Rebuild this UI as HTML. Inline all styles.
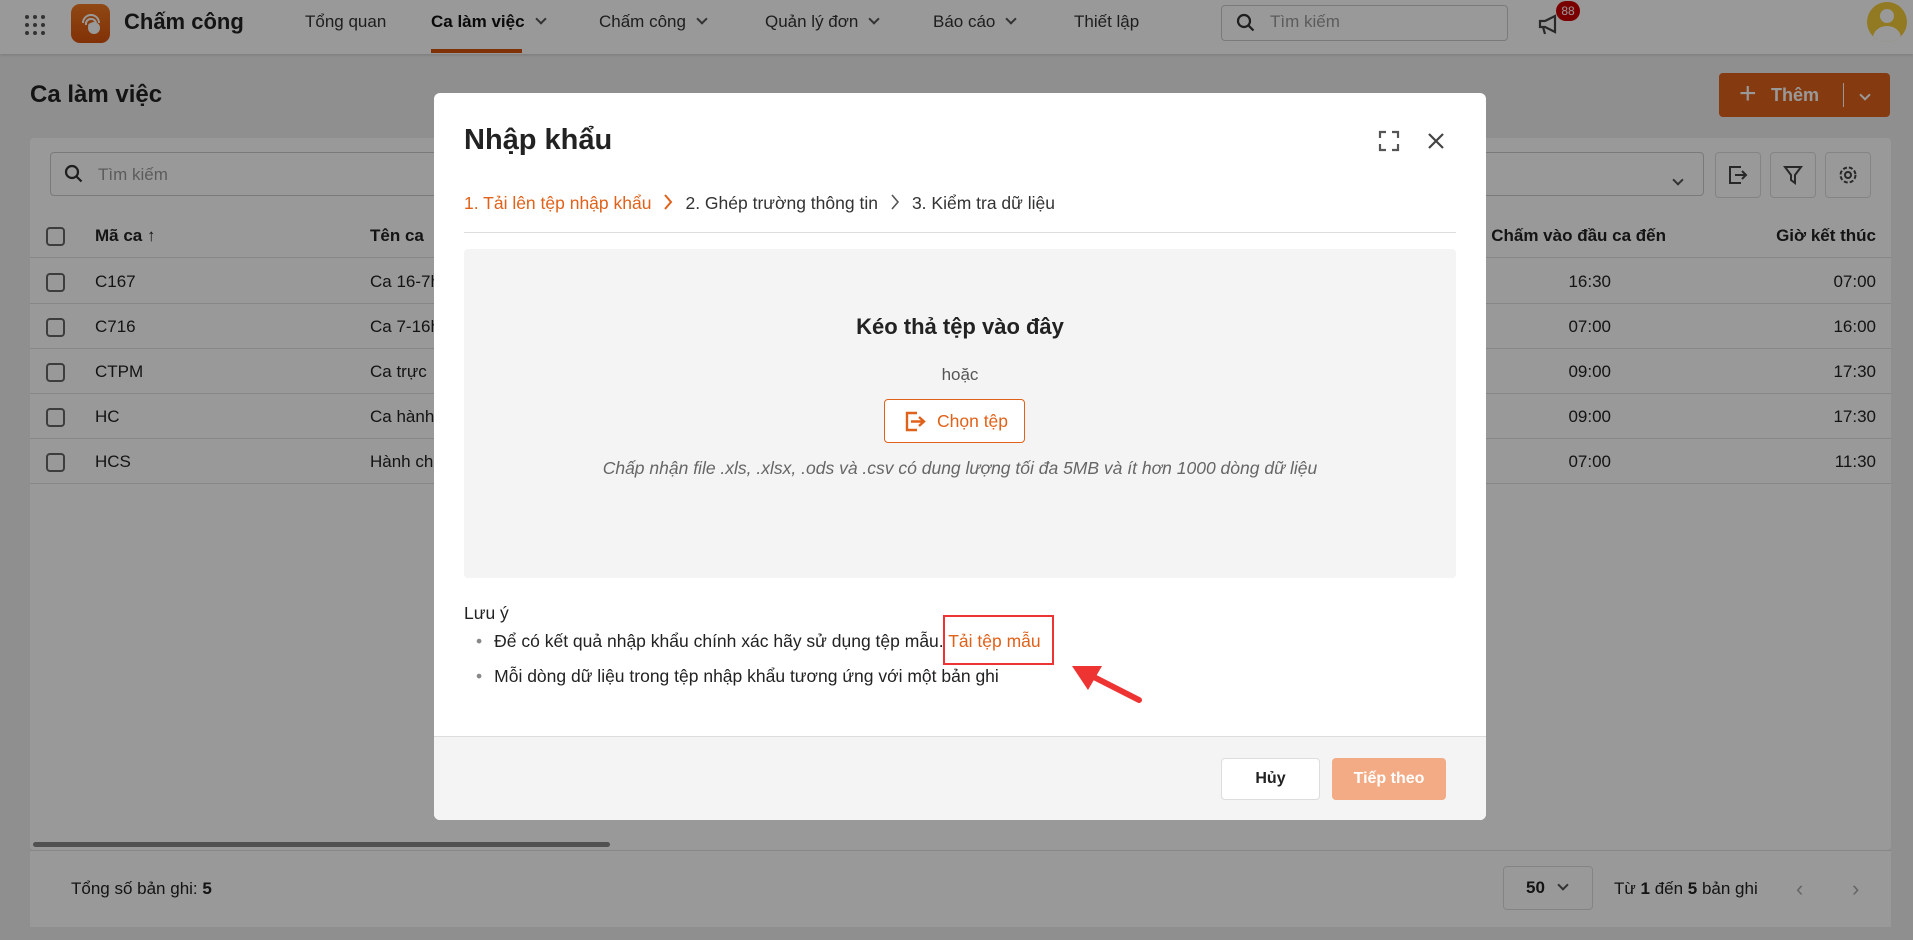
<!DOCTYPE html>
<html><head><meta charset="utf-8">
<style>
*{box-sizing:border-box;margin:0;padding:0}
body{width:1913px;height:940px;overflow:hidden;position:relative;background:#eeeeee;font-family:"Liberation Sans",sans-serif;color:#222}
.a{position:absolute}
.hdr{left:0;top:0;width:1913px;height:54px;background:#fff;box-shadow:0 1px 3px rgba(0,0,0,.15)}
.nav{top:0;height:54px;line-height:44px;font-size:17px;color:#333}
.chev{display:inline-block;width:8px;height:8px;border-right:2px solid #555;border-bottom:2px solid #555;transform:rotate(45deg);margin-left:12px;position:relative;top:-4px}
.panel{left:30px;top:138px;width:1861px;height:712px;background:#fff;border-radius:4px}
.row{left:30px;width:1861px;height:45px;border-bottom:1px solid #e2e2e2;font-size:17px;line-height:45px}
.cb{position:absolute;left:16px;top:14px;width:19px;height:19px;border:2px solid #666;border-radius:4px}
.ov{left:0;top:0;width:1913px;height:940px;background:rgba(0,0,0,.4)}
.modal{left:434px;top:93px;width:1052px;height:727px;background:#fff;border-radius:6px;overflow:hidden}
.ib{width:46px;height:46px;border:1px solid #ddd;border-radius:4px;background:#fff;top:152px}
.sc{display:inline-block;vertical-align:middle;margin:0 12px;position:relative;top:-2px}
</style></head><body>
<div class="a hdr"></div>
<svg class="a" style="left:24px;top:14px" width="22" height="22" viewBox="0 0 22 22" fill="#555"><circle cx="3" cy="3" r="2"/><circle cx="11" cy="3" r="2"/><circle cx="19" cy="3" r="2"/><circle cx="3" cy="11" r="2"/><circle cx="11" cy="11" r="2"/><circle cx="19" cy="11" r="2"/><circle cx="3" cy="19" r="2"/><circle cx="11" cy="19" r="2"/><circle cx="19" cy="19" r="2"/></svg>
<div class="a" style="left:71px;top:4px;width:39px;height:39px;border-radius:9px;background:linear-gradient(#f07a22,#d8520c)"></div>
<svg class="a" style="left:77px;top:9px" width="28" height="28" viewBox="0 0 28 28" fill="none" stroke="#fff" stroke-width="2"><path d="M6 14a8 8 0 0 1 16 0M9 16a5 5 0 0 1 10-2M12 17a2 2 0 0 1 4 0"/><circle cx="17" cy="19" r="5" fill="#fff"/></svg>
<div class="a" style="left:124px;top:9px;font-size:22px;font-weight:bold;color:#222">Chấm công</div>
<div class="a nav" style="left:305px">Tổng quan</div>
<div class="a nav" style="left:431px;font-weight:bold;color:#111">Ca làm việc<span class="chev"></span></div>
<div class="a" style="left:431px;top:49px;width:91px;height:4px;background:#d8520c"></div>
<div class="a nav" style="left:599px">Chấm công<span class="chev"></span></div>
<div class="a nav" style="left:765px">Quản lý đơn<span class="chev"></span></div>
<div class="a nav" style="left:933px">Báo cáo<span class="chev"></span></div>
<div class="a nav" style="left:1074px">Thiết lập</div>
<div class="a" style="left:1221px;top:5px;width:287px;height:36px;border:1px solid #ccc;border-radius:4px;background:#fff"></div>
<svg class="a" style="left:1236px;top:13px" width="20" height="20" viewBox="0 0 20 20" fill="none" stroke="#333" stroke-width="2.2"><circle cx="8" cy="8" r="6"/><path d="M12.5 12.5l5 5"/></svg>
<div class="a" style="left:1270px;top:12px;font-size:17px;color:#999">Tìm kiếm</div>
<svg class="a" style="left:1537px;top:12px" width="26" height="26" viewBox="0 0 26 26" fill="none" stroke="#444" stroke-width="2.2"><path d="M3 9h5l10-5v16l-10-5H3zM6 15l2 7"/></svg>
<div class="a" style="left:1556px;top:1px;width:24px;height:20px;border-radius:10px;background:#c00;color:#fff;font-size:12px;line-height:20px;text-align:center">88</div>
<div class="a" style="left:1867px;top:2px;width:40px;height:40px;border-radius:50%;background:#f2cc3a;overflow:hidden"><div class="a" style="left:13px;top:7px;width:14px;height:14px;border-radius:50%;background:#fff"></div><div class="a" style="left:6px;top:24px;width:28px;height:24px;border-radius:50%;background:#fff"></div></div>

<div class="a" style="left:30px;top:81px;font-size:24px;font-weight:bold;color:#222">Ca làm việc</div>
<div class="a" style="left:1719px;top:73px;width:171px;height:44px;background:#e0621a;border-radius:4px;color:#fff;font-size:18px;font-weight:bold;line-height:44px"><span style="position:absolute;left:20px;font-size:30px;font-weight:normal;top:-1px">+</span><span style="position:absolute;left:52px">Thêm</span><span style="position:absolute;left:124px;top:10px;width:1px;height:24px;background:#fff"></span><span class="chev" style="position:absolute;left:130px;top:18px;border-color:#fff"></span></div>
<div class="a panel"></div>
<div class="a" style="left:50px;top:152px;width:1654px;height:44px;border:1px solid #ccc;border-radius:4px"></div>
<svg class="a" style="left:64px;top:164px" width="20" height="20" viewBox="0 0 20 20" fill="none" stroke="#333" stroke-width="2.2"><circle cx="8" cy="8" r="6"/><path d="M12.5 12.5l5 5"/></svg>
<div class="a" style="left:98px;top:165px;font-size:17px;color:#999">Tìm kiếm</div>
<span class="a chev" style="left:1674px;top:171px;margin:0"></span>
<div class="a ib" style="left:1715px"></div><div class="a ib" style="left:1770px"></div><div class="a ib" style="left:1825px"></div>
<svg class="a" style="left:1727px;top:164px" width="22" height="22" viewBox="0 0 22 22" fill="none" stroke="#444" stroke-width="2"><path d="M14 3H3v16h11M8 11h11M15 7l4 4-4 4"/></svg>
<svg class="a" style="left:1782px;top:164px" width="22" height="22" viewBox="0 0 22 22" fill="none" stroke="#444" stroke-width="2"><path d="M3 3h16l-6 8v8l-4-3v-5z"/></svg>
<svg class="a" style="left:1837px;top:164px" width="22" height="22" viewBox="0 0 22 22" fill="none" stroke="#444" stroke-width="2"><circle cx="11" cy="11" r="3"/><circle cx="11" cy="11" r="7.5" stroke-dasharray="4 2"/></svg>
<div class="a row" style="top:213px;font-weight:bold;background:#fff"><div class="cb"></div><span class="a" style="left:65px">Mã ca ↑</span><span class="a" style="left:340px">Tên ca</span><span class="a" style="right:225px">Chấm vào đầu ca đến</span><span class="a" style="right:15px">Giờ kết thúc</span></div>
<div class="a row" style="top:259px"><div class="cb"></div><span class="a" style="left:65px">C167</span><span class="a" style="left:340px">Ca 16-7h</span><span class="a" style="right:280px">16:30</span><span class="a" style="right:15px">07:00</span></div>
<div class="a row" style="top:304px"><div class="cb"></div><span class="a" style="left:65px">C716</span><span class="a" style="left:340px">Ca 7-16h</span><span class="a" style="right:280px">07:00</span><span class="a" style="right:15px">16:00</span></div>
<div class="a row" style="top:349px"><div class="cb"></div><span class="a" style="left:65px">CTPM</span><span class="a" style="left:340px">Ca trực</span><span class="a" style="right:280px">09:00</span><span class="a" style="right:15px">17:30</span></div>
<div class="a row" style="top:394px"><div class="cb"></div><span class="a" style="left:65px">HC</span><span class="a" style="left:340px">Ca hành</span><span class="a" style="right:280px">09:00</span><span class="a" style="right:15px">17:30</span></div>
<div class="a row" style="top:439px"><div class="cb"></div><span class="a" style="left:65px">HCS</span><span class="a" style="left:340px">Hành ch</span><span class="a" style="right:280px">07:00</span><span class="a" style="right:15px">11:30</span></div>
<div class="a" style="left:33px;top:842px;width:577px;height:5px;border-radius:3px;background:#888"></div>
<div class="a" style="left:30px;top:850px;width:1861px;height:77px;background:#fff;border-top:1px solid #e2e2e2"></div>
<div class="a" style="left:71px;top:879px;font-size:17px">Tổng số bản ghi: <b>5</b></div>
<div class="a" style="left:1503px;top:866px;width:90px;height:44px;border:1px solid #ddd;border-radius:4px;background:#fff;font-size:17px;font-weight:bold;line-height:42px;padding-left:22px">50<span class="chev" style="margin-left:14px"></span></div>
<div class="a" style="left:1614px;top:879px;font-size:17px">Từ <b>1</b> đến <b>5</b> bản ghi</div>
<div class="a" style="left:1796px;top:876px;font-size:22px;color:#aaa">&#x2039;</div>
<div class="a" style="left:1852px;top:876px;font-size:22px;color:#aaa">&#x203A;</div>

<div class="a ov"></div>

<div class="a modal">
 <div class="a" style="left:30px;top:31px;font-size:29px;font-weight:bold;color:#222">Nhập khẩu</div>
 <svg class="a" style="left:944px;top:37px" width="22" height="22" viewBox="0 0 22 22" fill="none" stroke="#555" stroke-width="2.2"><path d="M2 8V2h6M14 2h6v6M20 14v6h-6M8 20H2v-6"/></svg>
 <svg class="a" style="left:992px;top:38px" width="20" height="20" viewBox="0 0 20 20" fill="none" stroke="#444" stroke-width="2.2"><path d="M3 3l14 14M17 3L3 17"/></svg>
 <div class="a" style="left:30px;top:100px;font-size:17.5px;color:#333;white-space:nowrap"><span style="color:#e0621a">1. Tải lên tệp nhập khẩu</span><svg class="sc" width="10" height="16" viewBox="0 0 10 16" fill="none" stroke="#e0621a" stroke-width="2"><path d="M2 1l6 7-6 7"/></svg>2. Ghép trường thông tin<svg class="sc" width="10" height="16" viewBox="0 0 10 16" fill="none" stroke="#555" stroke-width="1.6"><path d="M2 1l6 7-6 7"/></svg>3. Kiểm tra dữ liệu</div>
 <div class="a" style="left:30px;top:139px;width:992px;height:1px;background:#ddd"></div>
 <div class="a" style="left:30px;top:156px;width:992px;height:329px;background:#f4f4f4;border-radius:4px;text-align:center">
  <div class="a" style="left:0;width:992px;top:65px;font-size:22px;font-weight:bold;color:#222">Kéo thả tệp vào đây</div>
  <div class="a" style="left:0;width:992px;top:116px;font-size:17px;color:#555">hoặc</div>
  <div class="a" style="left:420px;top:150px;width:141px;height:44px;border:1px solid #e0621a;border-radius:4px;background:#fff;color:#e0621a;font-size:17.5px;line-height:42px;padding-left:52px;text-align:left">Chọn tệp
   <svg class="a" style="left:20px;top:11px" width="22" height="21" viewBox="0 0 22 21" fill="none" stroke="#e0621a" stroke-width="2.4"><path d="M12 2H2v17h10M6 10.5h13M14 6l5 4.5-5 4.5"/></svg></div>
  <div class="a" style="left:0;width:992px;top:209px;font-size:17.5px;font-style:italic;color:#666">Chấp nhận file .xls, .xlsx, .ods và .csv có dung lượng tối đa 5MB và ít hơn 1000 dòng dữ liệu</div>
 </div>
 <div class="a" style="left:30px;top:510px;font-size:17.5px;color:#222">Lưu ý</div>
 <div class="a" style="left:42px;top:538px;font-size:17.5px;color:#222;white-space:nowrap"><span style="color:#888;margin-right:12px">•</span>Để có kết quả nhập khẩu chính xác hãy sử dụng tệp mẫu. <span style="color:#e0621a">Tải tệp mẫu</span></div>
 <div class="a" style="left:42px;top:573px;font-size:17.5px;color:#222;white-space:nowrap"><span style="color:#888;margin-right:12px">•</span>Mỗi dòng dữ liệu trong tệp nhập khẩu tương ứng với một bản ghi</div>
 <div class="a" style="left:509px;top:522px;width:111px;height:50px;border:2px solid #e33"></div>
 <svg class="a" style="left:630px;top:565px" width="90" height="55" viewBox="0 0 90 55"><path d="M75 42L20 14" stroke="#e33" stroke-width="6" stroke-linecap="round"/><path d="M8 8l30 0-14 24z" fill="#e33"/></svg>
 <div class="a" style="left:0;top:643px;width:1052px;height:84px;background:#f4f4f4;border-top:1px solid #ddd"></div>
 <div class="a" style="left:787px;top:665px;width:99px;height:42px;border:1px solid #ddd;border-radius:4px;background:#fff;font-size:16px;font-weight:bold;text-align:center;line-height:40px">Hủy</div>
 <div class="a" style="left:898px;top:665px;width:114px;height:42px;border-radius:4px;background:#f2ab84;color:#fff;font-size:16px;font-weight:bold;text-align:center;line-height:42px">Tiếp theo</div>
</div>
</body></html>
